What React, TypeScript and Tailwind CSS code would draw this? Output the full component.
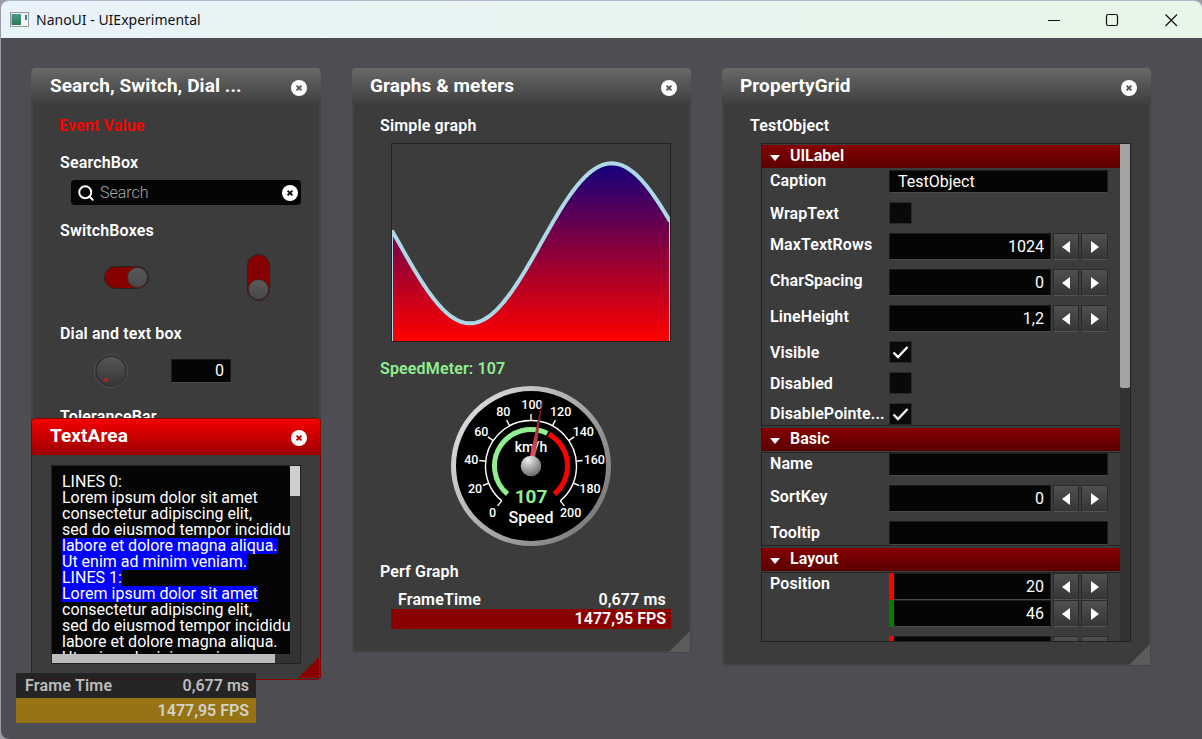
import React from "react";
import { Search } from "lucide-react";

const CloseBtn = ({ x = "#555", size = 16 }: { x?: string; size?: number }) => (
  <svg width={size} height={size} viewBox="0 0 16 16" className="shrink-0">
    <circle cx="8" cy="8" r="8" fill="#fff" />
    <path d="M5.6 5.6l4.8 4.8M10.4 5.6l-4.8 4.8" stroke={x} strokeWidth="2" />
  </svg>
);

const Label = ({ children, className = "" }: { children: React.ReactNode; className?: string }) => (
  <div className={`h-5 leading-5 text-base font-semibold tracking-[0.15px] text-white whitespace-nowrap ${className}`}>{children}</div>
);

const Header = ({ title, red, pl = "pl-[18px]" }: { title: string; red?: boolean; pl?: string }) => (
  <div
    className={`flex h-[37px] items-center justify-between rounded-t-[4px] pr-[14px] ${pl} ${
      red ? "bg-linear-to-b from-[#f80000] to-[#9c0000]" : "bg-linear-to-b from-[#696969] to-[#3e3e3e]"
    }`}
  >
    <span className="-mt-[2px] text-[19px] font-bold tracking-[0.08px] leading-none text-white whitespace-nowrap">{title}</span>
    <span className="mt-[2px]">
      <CloseBtn x={red ? "#c00000" : "#555"} />
    </span>
  </div>
);

const Grip = ({ color = "#5c5c5c" }: { color?: string }) => (
  <svg width="21" height="21" viewBox="0 0 21 21" className="absolute bottom-[1px] right-[1px]">
    <path d="M21 0V21H0Z" fill={color} />
  </svg>
);

const Switch = ({ vertical }: { vertical?: boolean }) => (
  <div
    className={`flex rounded-full border border-[#252525] bg-[#860000] ${
      vertical ? "h-[47px] w-[23px] flex-col justify-end" : "h-[23px] w-[45px] justify-end"
    }`}
  >
    <div className="h-[21px] w-[21px] rounded-full border border-[#333] bg-linear-to-b from-[#5a5a5a] to-[#484848]" />
  </div>
);

const inputCls = "bg-[#050505] border border-[#1c1c1c] border-b-[#4a4a4a] text-white";

const Arrow = ({ right }: { right?: boolean }) => (
  <svg width="8" height="12" viewBox="0 0 8 12">
    <path d={right ? "M0 0L8 6L0 12Z" : "M8 0L0 6L8 12Z"} fill="#fff" />
  </svg>
);

const StepBtn = ({ right, w }: { right?: boolean; w: string }) => (
  <div className={`flex items-center justify-center border border-[#2a2a2a] border-b-[#555] bg-linear-to-b from-[#505050] to-[#363636] ${w}`}>
    <Arrow right={right} />
  </div>
);

const NumRow = ({ value, strip }: { value: string; strip?: string }) => (
  <div className="flex h-[27px] w-[219px] gap-[2px]">
    <div className={`relative flex w-[162px] items-center justify-end pr-[6px] font-normal leading-none ${inputCls}`}>
      {strip && <div className={`absolute -bottom-px -left-px -top-px w-[5px] ${strip}`} />}
      {value}
    </div>
    <StepBtn w="w-[26px]" />
    <StepBtn right w="w-[27px]" />
  </div>
);

const Check = ({ on }: { on?: boolean }) => (
  <div className="flex h-[22px] w-[23px] items-center justify-center border border-[#2a2a2a] bg-[#090909]">
    {on && (
      <svg width="17" height="14" viewBox="0 0 17 14">
        <path d="M1.5 7.5L6 12L15.5 2" fill="none" stroke="#fff" strokeWidth="2.4" />
      </svg>
    )}
  </div>
);

const TextInput = ({ value = "", h }: { value?: string; h: string }) => (
  <div className={`flex w-[219px] items-center pl-[8px] font-normal ${h} ${inputCls}`}>{value}</div>
);

const Row = ({ label, children, lh = "leading-[24px]" }: { label: string; children: React.ReactNode; lh?: string }) => (
  <div className="flex pl-2">
    <div className={`h-[22px] w-[119px] text-base font-semibold tracking-[0.1px] text-white whitespace-nowrap ${lh}`}>{label}</div>
    {children}
  </div>
);

const SectionHead = ({ title, first }: { title: string; first?: boolean }) => (
  <div className={first ? "pt-px pb-[2px]" : "border-y border-[#262626] pt-[2px] pb-px"}>
    <div className="flex h-[23px] items-center bg-linear-to-b from-[#860000] to-[#5a0000] pl-2">
      <svg width="10" height="6" viewBox="0 0 10 6" className="mt-[2px]">
        <path d="M0 0H10L5 6Z" fill="#fff" />
      </svg>
      <span className="-mt-[2px] ml-[10px] text-base font-semibold text-white">{title}</span>
    </div>
  </div>
);

const PropertyRows = ({ children }: { children: React.ReactNode }) => <div className="flex flex-col gap-[9px]">{children}</div>;

const GW = 278;
const GH = 197;
const curve = Array.from({ length: 140 }, (_, i) => {
  const px = (i / 139) * GW;
  const x = 392 + px;
  const y = 243.3 - 80 * Math.cos(((x - 611.7) * 2 * Math.PI) / 283.4) - 144;
  return `${px.toFixed(1)},${y.toFixed(1)}`;
}).join(" ");

const polar = (r: number, v: number) => {
  const a = ((-140 + v * 1.4) * Math.PI) / 180;
  return [80 + r * Math.sin(a), 80 - r * Math.cos(a)];
};
const arc = (r: number, a: number, b: number) => {
  const [x1, y1] = polar(r, a);
  const [x2, y2] = polar(r, b);
  return `M${x1} ${y1}A${r} ${r} 0 ${(b - a) * 1.4 > 180 ? 1 : 0} 1 ${x2} ${y2}`;
};
const tickLabels: [string, number, number][] = [
  ["0", 158, 412],
  ["20", 105, 342],
  ["40", 94, 255],
  ["60", 124, 170],
  ["80", 190, 110],
  ["100", 276, 88],
  ["120", 362, 110],
  ["140", 430, 170],
  ["160", 463, 255],
  ["180", 450, 342],
  ["200", 392, 412],
];

const Gauge = () => {
  const [tx, ty] = polar(72, 107);
  const [lx, ly] = [(tx - 80) / 72, (ty - 80) / 72];
  return (
    <svg width="160" height="160" viewBox="0 0 160 160" className="ml-[99px] mt-[7px] block">
      <defs>
        <linearGradient id="ring" x1="0" y1="0.2" x2="1" y2="0.9">
          <stop offset="0" stopColor="#e0e0e0" />
          <stop offset="0.5" stopColor="#a8a8a8" />
          <stop offset="1" stopColor="#707070" />
        </linearGradient>
        <radialGradient id="hub" cx="0.35" cy="0.2" r="0.95">
          <stop offset="0" stopColor="#eeeeee" />
          <stop offset="1" stopColor="#555555" />
        </radialGradient>
        <linearGradient id="needle" gradientUnits="userSpaceOnUse" x1="80" y1="80" x2={tx} y2={ty}>
          <stop offset="0" stopColor="#f06070" />
          <stop offset="1" stopColor="#600010" />
        </linearGradient>
      </defs>
      <circle cx="80" cy="80" r="80" fill="url(#ring)" />
      <circle cx="80" cy="80" r="75" fill="#000" />
      <path d={arc(45.5, 0, 200)} fill="none" stroke="#fff" strokeWidth="1.4" />
      {tickLabels.map(([t]) => {
        const [x1, y1] = polar(45.5, Number(t));
        const [x2, y2] = polar(52, Number(t));
        return <line key={t} x1={x1} y1={y1} x2={x2} y2={y2} stroke="#fff" strokeWidth="1.4" />;
      })}
      <path d={arc(36.5, 0, 119)} fill="none" stroke="#90ee90" strokeWidth="5" />
      <path d={arc(36.5, 121, 200)} fill="none" stroke="#ff0000" strokeWidth="5" />
      {tickLabels.map(([t, zx, zy]) => (
        <text key={t} x={zx / 3 - 11} y={zy / 3 - 11 + 4.3} textAnchor="middle" fontSize="12.5" fontWeight="500" fill="#fff">
          {t}
        </text>
      ))}
      <text x="80" y="66" textAnchor="middle" fontSize="14" fontWeight="500" fill="#fff">
        km/h
      </text>
      <text x="80" y="116.5" textAnchor="middle" fontSize="19" fontWeight="700" fill="#90ee90">
        107
      </text>
      <text x="80" y="137" textAnchor="middle" fontSize="16" fontWeight="500" fill="#fff">
        Speed
      </text>
      <polygon
        points={`${80 - ly * 3},${80 + lx * 3} ${tx},${ty} ${80 + ly * 3},${80 - lx * 3}`}
        fill="url(#needle)"
      />
      <circle cx="80" cy="80" r="10.3" fill="url(#hub)" />
    </svg>
  );
};

const lines: [string, number?][] = [
  ["LINES 0:"],
  ["Lorem ipsum dolor sit amet"],
  ["consectetur adipiscing elit,"],
  ["sed do eiusmod tempor incididunt ut"],
  ["labore et dolore magna aliqua.", 1],
  ["Ut enim ad minim veniam.", 1],
  ["LINES 1:", 1],
  ["Lorem ipsum dolor sit amet", 1],
  ["consectetur adipiscing elit,"],
  ["sed do eiusmod tempor incididunt ut"],
  ["labore et dolore magna aliqua."],
  ["Ut enim ad minim veniam."],
];

const panel = "rounded-[4px] bg-[#3c3c3c] shadow-[inset_2px_0_0_#46464a,inset_-2px_0_0_#46464a,inset_0_-2px_0_#46464a]";

export default function App() {
  return (
    <div className="relative h-[739px] w-[1202px] overflow-hidden bg-[#9a9aa4] font-['Roboto',sans-serif]">
      <div className="ml-px flex h-[739px] flex-col overflow-hidden rounded-t-[8px] rounded-bl-[8px] border-t border-[#b4b8cc]">
        <div className="flex h-[37px] shrink-0 items-center bg-linear-to-r from-[#e9f3fa] to-[#e8f6e8]">
          <svg width="19" height="15" viewBox="0 0 19 15" className="ml-[9px]">
            <defs>
              <linearGradient id="ti" x1="0" y1="0" x2="0" y2="1">
                <stop offset="0" stopColor="#4a9a98" />
                <stop offset="1" stopColor="#2a7a50" />
              </linearGradient>
            </defs>
            <rect x="0.5" y="0.5" width="18" height="14" fill="#f4f4f4" stroke="#9a9a9a" />
            <rect x="1.5" y="2" width="9.5" height="11" fill="url(#ti)" />
            <rect x="15" y="3" width="2" height="5" fill="#3a80a0" />
          </svg>
          <span className="ml-[7px] font-['Noto_Sans',sans-serif] text-[14px] text-[#111]">NanoUI - UIExperimental</span>
          <svg width="130" height="14" viewBox="0 0 130 14" className="ml-auto mr-[24px] mt-[1px]" fill="none" stroke="#111">
            <path d="M0 7.5H12" strokeWidth="1.2" />
            <rect x="58.5" y="1.5" width="11" height="11" rx="1.5" strokeWidth="1.2" />
            <path d="M117.5 1.5L129 13M129 1.5L117.5 13" strokeWidth="1.2" />
          </svg>
        </div>
        <div className="flex-1 bg-[#4e4d53]" />
      </div>

      {/* Search, Switch, Dial */}
      <div className={`absolute left-[31px] top-[68px] h-[600px] w-[290px] overflow-hidden ${panel}`}>
        <Header title="Search, Switch, Dial ..." pl="pl-[19px]" />
        <div className="flex flex-col pl-[29px] pt-[11px]">
          <Label className="-ml-px text-[#ff0000]!">Event Value</Label>
          <Label className="mt-[17px]">SearchBox</Label>
          <div className="ml-[11px] mt-[7px] flex h-[25px] w-[230px] items-center rounded-[4px] bg-[#050505] pl-[6px] pr-[3px]">
            <Search size={18} color="#fff" strokeWidth={2.6} />
            <span className="ml-[5px] flex-1 text-base font-light text-[#a8a8a8]">Search</span>
            <CloseBtn x="#111" />
          </div>
          <Label className="mt-[16px]">SwitchBoxes</Label>
          <div className="ml-[44px] mt-[13px] flex w-[166px] items-center justify-between">
            <Switch />
            <Switch vertical />
          </div>
          <Label className="mt-[23px]">Dial and text box</Label>
          <div className="ml-[35px] mt-[11px] flex items-center">
            <div className="relative h-[32px] w-[32px] rounded-full border-2 border-[#333] bg-linear-to-b from-[#555] to-[#383838] outline outline-[#505050]">
              <div className="absolute bottom-[3px] left-[7px] h-[4px] w-[4px] rounded-full bg-[#c02020]" />
            </div>
            <div className={`ml-[44px] flex h-[24px] w-[60px] items-center justify-end pr-[6px] font-normal ${inputCls}`}>0</div>
          </div>
          <Label className="mt-[20px]">ToleranceBar</Label>
        </div>
      </div>

      {/* TextArea */}
      <div className="absolute left-[31px] top-[418px] h-[262px] w-[290px] overflow-hidden rounded-[4px] border border-[#8b0000] bg-[#3c3c3c]">
        <div className="-mx-px -mt-px">
          <Header title="TextArea" red pl="pl-[19px]" />
        </div>
        <div className="ml-[19px] mt-[10px] flex h-[199px] w-[250px] border border-[#222] bg-[#050505]">
          <div className="flex w-[238px] flex-col">
            <div className="h-[188px] w-[238px] overflow-hidden pl-[10px] pt-[8px] text-base leading-4 text-white">
              {lines.map(([t, sel], i) => (
                <div key={i} className="h-4 whitespace-nowrap">
                  <span className={`inline-block h-4 ${sel ? "bg-[#0000ff]" : ""}`}>
                    <span className="relative z-10">{t}</span>
                  </span>
                </div>
              ))}
            </div>
            <div className="flex h-[9px] w-[248px] bg-[#333]">
              <div className="w-[223px] bg-[#bcbcbc]" />
            </div>
          </div>
          <div className="ml-auto h-[188px] w-[10px] bg-[#333]">
            <div className="h-[30px] bg-[#cfcfcf]" />
          </div>
        </div>
        <Grip color="#8b0000" />
      </div>

      {/* Graphs & meters */}
      <div className={`absolute left-[352px] top-[68px] h-[585px] w-[339px] ${panel}`}>
        <Header title="Graphs & meters" />
        <div className="flex flex-col pt-[11px]">
          <Label className="ml-[28px]">Simple graph</Label>
          <div className="ml-[39px] mt-[7px] h-[199px] w-[280px] border border-[#222]">
            <svg width={GW} height={GH} viewBox={`0 0 ${GW} ${GH}`} className="block">
              <defs>
                <linearGradient id="fill" gradientUnits="userSpaceOnUse" x1="0" y1="19" x2="0" y2={GH}>
                  <stop offset="0" stopColor="#12007e" />
                  <stop offset="0.45" stopColor="#800040" />
                  <stop offset="1" stopColor="#ff0000" />
                </linearGradient>
              </defs>
              <polygon points={`0,${GH} ${curve} ${GW},${GH}`} fill="url(#fill)" />
              <path d={`M0.5 86V${GH}M${GW - 0.5} 76V${GH}`} stroke="#add8e6" strokeWidth="1" />
              <polyline points={curve} fill="none" stroke="#add8e6" strokeWidth="4" />
            </svg>
          </div>
          <Label className="ml-[28px] mt-[17px] text-[#90ee90]!">SpeedMeter: 107</Label>
          <Gauge />
          <Label className="ml-[28px] mt-[16px]">Perf Graph</Label>
          <div className="ml-[46px] mt-[8px] flex h-[19px] w-[268px] items-center justify-between text-base font-semibold tracking-[0.15px] text-white">
            <span>FrameTime</span>
            <span>0,677 ms</span>
          </div>
          <div className="ml-[39px] flex h-[20px] w-[280px] items-center justify-end bg-[#8b0000] pr-[5px] text-base font-semibold text-white">
            1477,95 FPS
          </div>
        </div>
        <Grip />
      </div>

      {/* PropertyGrid */}
      <div className={`absolute left-[722px] top-[68px] h-[598px] w-[429px] ${panel}`}>
        <Header title="PropertyGrid" />
        <div className="flex flex-col pt-[11px]">
          <Label className="ml-[28px]">TestObject</Label>
          <div className="ml-[39px] mt-[7px] flex h-[499px] w-[370px] border border-[#222]">
            <div className="h-full w-[358px] overflow-hidden text-base text-white">
              <SectionHead title="UILabel" first />
              <PropertyRows>
                <Row label="Caption" lh="leading-[22px]">
                  <TextInput value="TestObject" h="h-[23px]" />
                </Row>
                <Row label="WrapText">
                  <Check />
                </Row>
                <Row label="MaxTextRows">
                  <NumRow value="1024" />
                </Row>
                <Row label="CharSpacing">
                  <NumRow value="0" />
                </Row>
                <Row label="LineHeight">
                  <NumRow value="1,2" />
                </Row>
                <Row label="Visible">
                  <Check on />
                </Row>
                <Row label="Disabled">
                  <Check />
                </Row>
                <Row label="DisablePointe..." lh="leading-[22px]">
                  <Check on />
                </Row>
              </PropertyRows>
              <SectionHead title="Basic" />
              <PropertyRows>
                <Row label="Name" lh="leading-[22px]">
                  <TextInput h="h-[23px]" />
                </Row>
                <Row label="SortKey">
                  <NumRow value="0" />
                </Row>
                <Row label="Tooltip">
                  <TextInput h="h-[24px]" />
                </Row>
              </PropertyRows>
              <SectionHead title="Layout" />
              <Row label="Position" lh="leading-[22px]">
                <div className="flex flex-col">
                  <NumRow value="20" strip="bg-[#ff0000]" />
                  <NumRow value="46" strip="bg-[#008000]" />
                  <div className="mt-[9px]">
                    <NumRow value="" strip="bg-[#ff0000]" />
                  </div>
                </div>
              </Row>
            </div>
            <div className="ml-auto h-full w-[10px] bg-[#333]">
              <div className="h-[244px] rounded-b-[2px] bg-[#a4a4a4]" />
            </div>
          </div>
        </div>
        <Grip />
      </div>

      {/* Perf overlay */}
      <div className="absolute left-[16px] top-[673px] z-20 w-[240px] text-base font-semibold">
        <div className="flex h-[25px] items-center justify-between bg-[#1e1e1e]/85 pl-[9px] pr-[7px] text-[#bcbcbc]">
          <span className="tracking-[0.2px]">Frame Time</span>
          <span>0,677 ms</span>
        </div>
        <div className="flex h-[25px] items-center justify-end bg-[#967415] pr-[7px] text-[#d2d2c8]">1477,95 FPS</div>
      </div>
    </div>
  );
}
